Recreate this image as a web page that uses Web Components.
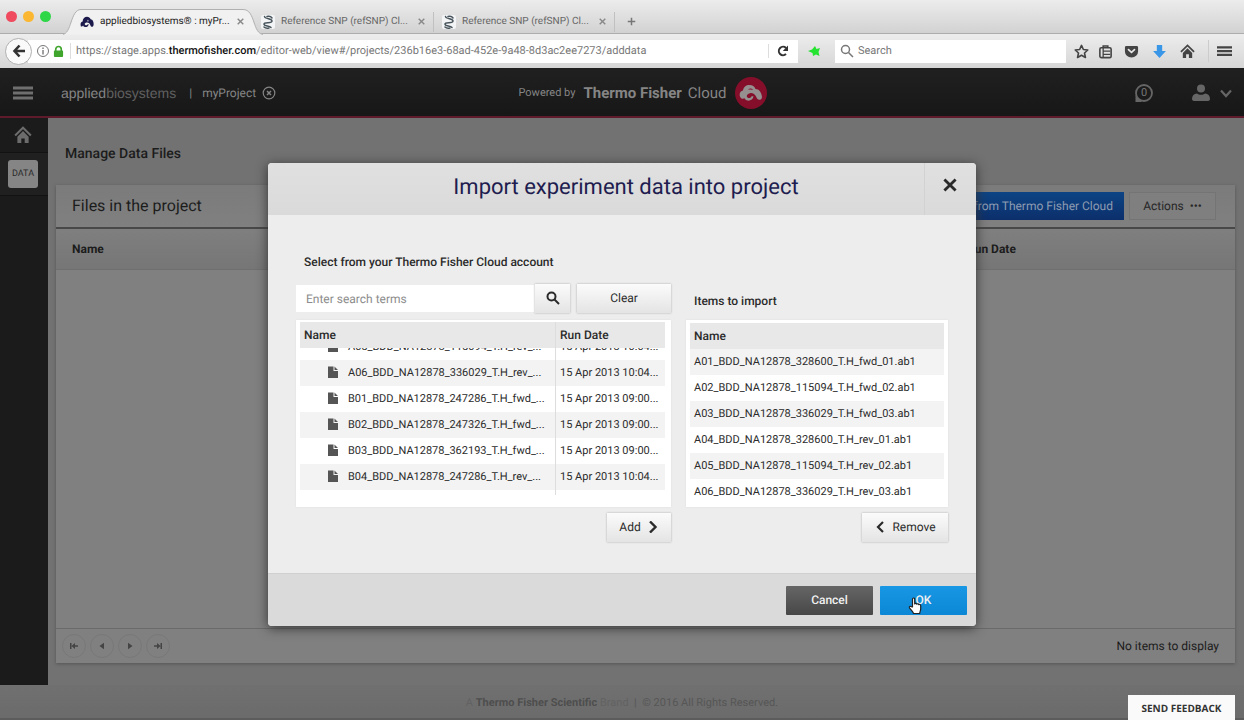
<!DOCTYPE html>
<html lang="en">
<head>
<meta charset="utf-8">
<title>appliedbiosystems® : myProject</title>
<style>
  body { margin: 0; font-family: Roboto, "Liberation Sans", sans-serif; font-size: 12px; text-rendering: geometricPrecision; }
</style>
</head>
<body>
<browser-window>
  <browser-tab slot="tabs" icon="cloud" active>appliedbiosystems® : myPr...</browser-tab>
  <browser-tab slot="tabs" icon="helix">Reference SNP (refSNP) Cl...</browser-tab>
  <browser-tab slot="tabs" icon="helix">Reference SNP (refSNP) Cl...</browser-tab>
  <app-header></app-header>
  <div style="display:flex; flex:1">
    <side-bar></side-bar>
    <files-page></files-page>
  </div>
  <app-footer></app-footer>
  <import-dialog slot="overlay">
    <span slot="title">Import experiment data into project</span>
    <cloud-picker slot="source"></cloud-picker>
    <import-list slot="target"></import-list>
  </import-dialog>
  <feedback-button slot="overlay"></feedback-button>
</browser-window>

<script>
const define = (name, markup, setup) => {
  const template = document.createElement('template');
  template.innerHTML = markup;
  customElements.define(name, class extends HTMLElement {
    connectedCallback() {
      if (this.shadowRoot) return;
      this.attachShadow({ mode: 'open' }).append(template.content.cloneNode(true));
      if (setup) setup(this, this.shadowRoot);
    }
  });
};

const BUTTON_RESET = 'button{font:inherit;color:inherit;border:0;padding:0;margin:0;background:none;display:inline-flex;align-items:center;justify-content:center}button,input{text-rendering:inherit}';

/* Icons: [viewBox width, viewBox height, markup] */
const ICONS = {
  cloud: [16, 14, '<path fill="currentColor" d="M1 12C0 9 1 7 3 6.500C3 3 5.500 1 8 1c2 0 3.500 1 4.200 2.800C14.500 4 15.800 7 15.600 10c-.2 1.500-1 2.500-2.200 2.300-1.200-.2-1.200-1.300-1.800-2.300-.8-1.600-2.400-2.700-4.300-2.300C5.500 8 4.800 9.700 6 10.500c1 .6 2.500 0 3-1.200l1 .5C9.500 12 7.500 13.200 5.500 12.700c-1-.3-1.700-.9-2-1.700C3 12 2.200 12.600 1 12z"/><circle cx="9" cy="5.500" r="1" fill="#fff" opacity=".5"/>'],
  helix: [14, 14, '<rect width="14" height="14" rx="2" fill="#f2f4f5"/><g fill="none" stroke="#48545c" stroke-width="1.500" stroke-linecap="round"><path d="M3.500 1.500C4 4.500 11 3 11 6S3 6.500 3 9s5 1.500 7 3.500"/><path d="M6 1.500c2-.5 4 0 5 1.500M3 12c1 1 3 1.500 5 1"/></g>'],
  close: [10, 10, '<path stroke="currentColor" stroke-width="2" d="M1 1l8 8M9 1L1 9"/>'],
  plus: [12, 12, '<path stroke="currentColor" stroke-width="2" d="M6 1v10M1 6h10"/>'],
  back: [14, 14, '<path fill="none" stroke="currentColor" stroke-width="2.600" d="M7.500 1.500L2.500 7l5 5.500M2.500 7H13"/>'],
  info: [14, 14, '<circle cx="7" cy="7" r="5.500" fill="none" stroke="currentColor"/><path stroke="currentColor" stroke-width="1.400" d="M7 6v4.500M7 3.500V5"/>'],
  lock: [12, 14, '<path fill="none" stroke="currentColor" stroke-width="1.800" d="M3 7V4.500a3 3 0 0 1 6 0V7"/><rect x="1" y="6" width="10" height="7" rx="1" fill="currentColor"/>'],
  reload: [14, 14, '<path fill="none" stroke="currentColor" stroke-width="2" d="M10 10a4.200 4.200 0 1 1 0-6"/><path fill="currentColor" d="M12 1.500v5.500H6.800z"/>'],
  greenstar: [14, 14, '<path fill="#25e331" d="M1 7l4-1.500L8 2l1.500 3L13 4l-1.500 4 1 4-3.500-1.500L6 12l-.5-3z"/>'],
  search: [14, 14, '<circle cx="5.500" cy="5.500" r="4" fill="none" stroke="currentColor" stroke-width="var(--w,1.500)"/><path stroke="currentColor" stroke-width="var(--w,1.500)" d="M8.500 8.500l4.500 4.500"/>'],
  star: [16, 16, '<path fill="none" stroke="currentColor" stroke-width="1.700" stroke-linejoin="round" d="M8 1.500l2 4.400 4.700.5-3.500 3.200 1 4.800L8 12l-4.200 2.400 1-4.800L1.300 6.400 6 5.900z"/>'],
  clipboard: [16, 16, '<rect x="2" y="4" width="12" height="10.500" rx="1.500" fill="none" stroke="currentColor" stroke-width="1.700"/><path stroke="currentColor" stroke-width="1.400" d="M5.500 4v10M5 7.500h8M5 11h8"/><path fill="none" stroke="currentColor" stroke-width="1.600" d="M5.500 4V2h5v2"/>'],
  pocket: [16, 16, '<path fill="currentColor" d="M2.500 2h11A1.500 1.500 0 0 1 15 3.500V8A7 6.500 0 0 1 1 8V3.500A1.500 1.500 0 0 1 2.500 2z"/><path fill="none" stroke="#e8e8e8" stroke-width="1.800" stroke-linecap="round" d="M4.800 6L8 9l3.200-3"/>'],
  download: [14, 14, '<path fill="currentColor" d="M4.500 1h5v5.500H13L7 13 1 6.500h3.500z"/>'],
  home: [16, 16, '<path fill="none" stroke="currentColor" stroke-width="1.800" d="M1 8.500l7-7 7 7"/><path fill="currentColor" d="M8 4.500l5 5V15H9.500v-4h-3v4H3V9.500z"/>'],
  menu: [20, 14, '<path stroke="currentColor" stroke-width="3" d="M0 2h20M0 7h20M0 12h20"/>'],
  circlex: [14, 14, '<circle cx="7" cy="7" r="5.800" fill="none" stroke="currentColor" stroke-width="1.200"/><path stroke="currentColor" stroke-width="1.500" d="M5 5l4 4M9 5L5 9"/>'],
  badge: [32, 32, '<circle cx="16" cy="16" r="16" fill="#850f2a"/><path fill="#958f90" d="M5 19.500c-1-3 .5-5.500 3-6C8.500 10 11 8 14.500 8c3 0 5 1.500 6 4 3.500 0 6 3.500 6.500 8 0 2-1.500 3-3 2.800-2-.3-2.200-1.800-3-3.300-1.200-2.500-3.500-3.800-6-3.300-2.800.6-4 2.800-2.500 4.300 1.500 1.200 3.800.3 4.300-1.500l1.700.6c-.5 3-3.200 4.400-6 4-1.500-.3-2.500-1-3-2.300-1.300.9-3.700.7-4.500-1.800z"/><path fill="#850f2a" d="M13 12.500c2-1.500 4-1 5 .5-1.500-.3-3-.3-5-.5z"/>'],
  chat: [20, 20, '<circle cx="10" cy="10" r="8" fill="none" stroke="currentColor" stroke-width="1.800"/><path fill="currentColor" d="M1.500 12v7h6.500z"/>'],
  user: [18, 18, '<circle cx="9" cy="4.500" r="4" fill="currentColor"/><path fill="currentColor" d="M0 15c0-3.500 2-5.300 5-5.500 2 1.700 6 1.700 8 0 3 .2 5 2 5 5.500 0 1.300-1 2-2 2H2c-1 0-2-.7-2-2z"/>'],
  down: [12, 12, '<path fill="none" stroke="currentColor" stroke-width="2.200" d="M1 3.500L6 9l5-5.500"/>'],
  right: [12, 12, '<path fill="none" stroke="currentColor" stroke-width="2.400" d="M3 0.500L8.500 6 3 11.500"/>'],
  left: [12, 12, '<path fill="none" stroke="currentColor" stroke-width="2.200" d="M9 1L4 6l5 5"/>'],
  file: [10, 12, '<path fill="currentColor" d="M0 .5h5.500V5H10v7H0zM6.500.5L10 4H6.500z"/>'],
  first: [10, 10, '<path fill="currentColor" d="M1 2h1.500v6H1zM2.500 5L6 2v2.200h3v1.600H6V8z"/>'],
  prev: [10, 10, '<path fill="currentColor" d="M2.500 5L7 1.800v6.400z"/>'],
  next: [10, 10, '<path fill="currentColor" d="M7.500 5L3 1.800v6.400z"/>'],
  last: [10, 10, '<path fill="currentColor" d="M9 2H7.500v6H9zM7.500 5L4 2v2.200H1v1.600h3V8z"/>'],
  hand: [14, 18, '<path fill="#fff" stroke="#222" stroke-width="1.200" stroke-linejoin="round" d="M4.500 10V2.200C4.500.6 6.700.6 6.700 2.200V7c.5-1 2-.7 2.100.2.600-.8 1.900-.4 2 .5.800-.6 1.900-.2 1.900 1V12c0 1.800-1 2.500-1 4.500H5.500c0-1.500-2.500-3.500-4-5.700-.6-1 .6-2 1.600-1.200z"/>']
};
customElements.define('ui-icon', class extends HTMLElement {
  connectedCallback() {
    if (this.shadowRoot) return;
    const [w, h, art] = ICONS[this.getAttribute('name')];
    this.attachShadow({ mode: 'open' }).innerHTML =
      `<style>:host{display:inline-flex;flex:none;width:${w}px;height:${h}px}svg{width:100%;height:100%}</style>
       <svg viewBox="0 0 ${w} ${h}" aria-hidden="true">${art}</svg>`;
  }
});

define('browser-tab', `
<style>
  :host{display:block;position:relative;width:181px;height:34px;box-sizing:border-box;color:#666}
  .row{position:relative;display:flex;align-items:center;gap:6px;height:25px;padding:9px 9px 0 8px}
  .label{flex:1;white-space:nowrap;font-size:10px;line-height:16px}
  .shape{display:none;position:absolute;left:-9px;top:9px;width:200px;height:26px}
  .sep{position:absolute;right:0;top:12px;width:1px;height:20px;background:#c0c0c0}
  .x{width:7px;height:7px;color:#888}
  :host([active]){z-index:1;color:#222}
  :host([active]) .shape{display:block}
  :host([active]) .sep{display:none}
  ${BUTTON_RESET}
</style>
<svg class="shape" viewBox="0 0 200 26"><path fill="#f1f1f1" stroke="#b0b0b0" d="M-1 25.500C9 25.500 7 .5 18 .5H180C193 .5 189 25.500 201 25.500"/></svg>
<div class="row"><slot name="icon"></slot><span class="label"><slot></slot></span><button aria-label="Close tab"><ui-icon class="x" name="close"></ui-icon></button></div>
<span class="sep"></span>`, (host, root) => {
  const icon = document.createElement('ui-icon');
  icon.setAttribute('name', host.getAttribute('icon'));
  icon.style.cssText = 'color:#1c1a4c;width:14px';
  root.querySelector('slot[name=icon]').replaceWith(icon);
});

define('browser-window', `
<style>
  :host{display:flex;flex-direction:column;min-height:100vh;background:#727272}
  .tabs{display:flex;align-items:stretch;height:34px;box-sizing:border-box;background:linear-gradient(#ececec,#d2d2d2);border-bottom:1px solid #adadad}
  .lights{display:flex;align-items:center;gap:6px;width:66px;padding-left:6px}
  .lights i{width:11px;height:11px;border-radius:50%;background:#f04a5e}
  .lights i:nth-child(2){background:#fbb731}.lights i:nth-child(3){background:#2fd648}
  .bar{display:flex;align-items:center;height:34px;box-sizing:border-box;padding:0 8px 0 5px;background:linear-gradient(#ededed,#d6d6d6);color:#444}
  .url{display:flex;align-items:center;flex:1;height:23px;margin-left:-4px;padding:0 8px 0 8px;background:#fff;color:#777;font-size:11px;line-height:16px}
  .url b{font-weight:500;color:#111}
  .url .lock{color:#3fa52c;margin:0 6px 0 3px;width:11px;height:13px}
  .addr{flex:1;border-left:1px solid #ddd;padding-left:5px;white-space:nowrap;overflow:hidden}
  .ext{margin:0 14px 0 9px}
  .find{display:flex;align-items:center;gap:4px;width:231px;height:23px;background:#fff;padding-left:5px;box-sizing:border-box;margin-right:3px;color:#777}
  .find input{flex:1;min-width:0;border:0;padding:0;background:none;font:11px/16px Roboto,sans-serif}
  input::placeholder{color:#777;opacity:1}
  .tools{display:flex;align-items:center}
  .page{position:relative;display:flex;flex-direction:column;flex:1}
  ${BUTTON_RESET}
  .back{width:27px;height:27px;border-radius:50%;flex:none;z-index:1;border:1px solid #b0b0b0;background:#fafafa;color:#333}
  .reload{border-left:1px solid #ddd;padding-left:7px;color:#333}
  .add{width:32px;padding-top:9px;color:#777}
  .add ui-icon{width:9px;height:9px}
  .tools button{width:28px}
  .tools button:nth-child(1),.tools button:nth-child(2){width:24px}
  .tools .menu{margin-left:7px;padding-left:4px;border-left:1px solid #ccc;height:22px}
  .tools ui-icon{width:15px;height:15px}
  .tools .menu ui-icon{width:15px;height:12px}
</style>
<div class="tabs"><div class="lights"><i></i><i></i><i></i></div><slot name="tabs"></slot><button class="add" aria-label="New tab"><ui-icon name="plus"></ui-icon></button></div>
<div class="bar">
  <button class="back" aria-label="Back"><ui-icon name="back"></ui-icon></button>
  <div class="url"><ui-icon name="info"></ui-icon><ui-icon class="lock" name="lock"></ui-icon>
    <span class="addr">https://stage.apps.<b>thermofisher.com</b>/editor-web/view#/projects/236b16e3-68ad-452e-9a48-8d3ac2ee7273/adddata</span>
    <button class="reload" aria-label="Reload"><ui-icon name="reload"></ui-icon></button></div>
  <ui-icon class="ext" name="greenstar"></ui-icon>
  <label class="find"><ui-icon name="search"></ui-icon><input type="text" placeholder="Search" aria-label="Search the web"></label>
  <div class="tools">
    <button aria-label="Bookmark"><ui-icon name="star"></ui-icon></button>
    <button aria-label="Library"><ui-icon name="clipboard"></ui-icon></button>
    <button aria-label="Pocket"><ui-icon name="pocket"></ui-icon></button>
    <button aria-label="Downloads" style="color:#3a97e8"><ui-icon name="download"></ui-icon></button>
    <button aria-label="Home"><ui-icon name="home"></ui-icon></button>
    <button class="menu" aria-label="Menu"><ui-icon name="menu"></ui-icon></button>
  </div>
</div>
<div class="page"><slot></slot><slot name="overlay"></slot></div>`);

define('app-header', `
<style>
  :host{display:grid;grid-template-columns:1fr auto 1fr;align-items:center;height:50px;box-sizing:border-box;padding:1px 12px 0 13px;background:linear-gradient(#202020,#171717);border-bottom:2px solid #5f1a2b;color:#858585;font-size:12px;line-height:20px}
  div{display:flex;align-items:center}
  ${BUTTON_RESET}
  .menu{color:#6f6f6f;margin-right:28px}
  .brand{font:14px/20px "Liberation Sans",sans-serif;color:#858585}
  .brand span{color:#606060}
  .bar{margin:0 10px 0 13px}
  .proj{margin-right:6px}
  .mid{margin-left:40px}
  .mid small{font-size:11px;margin-right:8px}
  .mid b{font-size:15px;font-weight:700;margin-right:6px}
  .mid span{font-size:15px;margin-right:8px}
  .end{justify-content:flex-end;color:#666}
  .chat{position:relative;margin-right:38px}
  .chat span{position:absolute;inset:0;text-align:center;font-size:11px;line-height:20px;color:#777}
  .user{gap:10px}
</style>
<div><button class="menu" aria-label="Open menu"><ui-icon name="menu"></ui-icon></button><span class="brand">applied<span>biosystems</span></span><span class="bar">|</span><span class="proj">myProject</span><button aria-label="Close project"><ui-icon name="circlex"></ui-icon></button></div>
<div class="mid"><small>Powered by</small><b>Thermo Fisher</b><span>Cloud</span><ui-icon name="badge"></ui-icon></div>
<div class="end"><button class="chat" aria-label="Messages"><ui-icon name="chat"></ui-icon><span>0</span></button><button class="user" aria-label="Account"><ui-icon name="user"></ui-icon><ui-icon name="down"></ui-icon></button></div>`);

define('side-bar', `
<style>
  :host{display:flex;flex-direction:column;width:48px;background:#1b1b1b;color:#6c6c6c}
  a{display:flex;align-items:center;justify-content:center;height:34px;padding-right:2px;border-bottom:1px solid #121212;color:inherit;text-decoration:none}
  a ui-icon{width:18px;height:18px}
  a.data{height:42px;background:#202020}
  .data span{width:30px;height:28px;border-radius:3px;background:#858585;color:#2a2a2a;font-size:9px;line-height:28px;text-align:center}
</style>
<a href="#home" aria-label="Home"><ui-icon name="home"></ui-icon></a>
<a href="#data" class="data"><span>DATA</span></a>`);

define('files-page', `
<style>
  :host{display:flex;flex-direction:column;flex:1;padding:26px 9px 22px 8px;color:#1c1c1c}
  h1{margin:0 0 21px 9px;font-size:14px;line-height:20px;font-weight:500}
  .panel{display:flex;flex-direction:column;flex:1;background:#808080;box-shadow:0 1px 3px #555}
  .head{display:flex;align-items:center;gap:5px;height:44px;padding:0 19px 0 16px;background:linear-gradient(#7b7b7b,#808080);border-bottom:2px solid #484848;box-sizing:border-box}
  h2{flex:1;margin:0;font-size:16px;line-height:20px;font-weight:400}
  ${BUTTON_RESET}
  .head button{height:28px;padding:0 11px;font-size:12px;background:linear-gradient(#0d4484,#0c2f6b);color:#8d9cb2;box-sizing:border-box}
  .head .act{width:87px;padding:0;background:#7f7f7f;border:1px solid #747474;color:#262626}
  table{width:100%;border-collapse:collapse;table-layout:fixed}
  th{height:40px;padding:0 16px;text-align:left;font-size:12px;line-height:16px;font-weight:700;background:linear-gradient(#7f7f7f,#767676);border-bottom:1px solid #6f6f6f;box-sizing:border-box}
  th:last-child{width:284px}
  .foot{display:flex;align-items:center;gap:4px;height:34px;margin-top:auto;padding:0 16px 0 6px;border-top:1px solid #6a6a6a}
  .foot button{width:24px;height:24px;border-radius:50%;border:1px solid #787878;color:#444}
  .foot span{margin-left:auto;font-size:12px;line-height:16px}
</style>
<h1>Manage Data Files</h1>
<section class="panel">
  <div class="head"><h2>Files in the project</h2><button>Import from Thermo Fisher Cloud</button><button class="act">Actions &nbsp;•••</button></div>
  <table><thead><tr><th>Name</th><th>Run Date</th></tr></thead></table>
  <div class="foot"><button aria-label="First page"><ui-icon name="first"></ui-icon></button><button aria-label="Previous page"><ui-icon name="prev"></ui-icon></button><button aria-label="Next page"><ui-icon name="next"></ui-icon></button><button aria-label="Last page"><ui-icon name="last"></ui-icon></button><span>No items to display</span></div>
</section>`);

define('app-footer', `
<style>
  :host{display:block;height:35px;box-sizing:border-box;border-bottom:2px solid #5c5c5c;background:linear-gradient(#707070,#6b6b6b);text-align:center;font-size:11px;line-height:36px;color:#565656}
  b{font-weight:700;color:#4e4e4e}span{color:#626262}
</style><span>A</span> <b>Thermo Fisher Scientific</b> <span>Brand</span> &nbsp;|&nbsp; © 2016 All Rights Reserved.`);

define('feedback-button', `
<style>
  :host{position:absolute;right:9px;bottom:0}
  ${BUTTON_RESET}
  button{height:25px;width:107px;background:#fafafa;color:#333;font:700 10px/16px "Open Sans",sans-serif}
</style><button>SEND FEEDBACK</button>`);

define('import-dialog', `
<style>
  :host{position:absolute;inset:0;display:grid;place-items:center}
  section{width:708px;max-width:90vw;border-radius:4px;overflow:hidden;background:#ededed;box-shadow:0 2px 12px #333}
  header{display:flex;align-items:center;height:52px;background:linear-gradient(#e0e0e0,#dadada)}
  h2{flex:1;margin:0;padding:0 0 2px 60px;text-align:center;font-size:22px;line-height:28px;font-weight:400;color:#211c4f}
  ${BUTTON_RESET}
  .close{width:52px;height:100%;border-left:1px solid #d2d2d2;box-sizing:border-box;color:#2a2a2a;padding:0 2px 7px 0}
  .close ui-icon{width:14px;height:14px}
  .body{display:flex;align-items:flex-end;gap:15px;padding:39px 28px 31px}
  slot[name=source]::slotted(*){flex:375}
  slot[name=target]::slotted(*){flex:262}
  footer{display:flex;justify-content:flex-end;gap:7px;padding:12px 9px 11px;border-top:1px solid #d0d0d0;background:#dadada}
  footer button{width:87px;height:29px;color:#f0f0f0;font-size:12px;font-weight:500;border-radius:1px;background:linear-gradient(#666,#474747)}
  footer .ok{position:relative;background:linear-gradient(#1897e4,#0b87d5)}
  .ok ui-icon{position:absolute;left:28px;top:11px}
</style>
<section role="dialog" aria-label="Import experiment data into project">
  <header><h2><slot name="title"></slot></h2><button class="close" aria-label="Close"><ui-icon name="close"></ui-icon></button></header>
  <div class="body"><slot name="source"></slot><slot name="target"></slot></div>
  <footer><button>Cancel</button><button class="ok">OK<ui-icon name="hand"></ui-icon></button></footer>
</section>`);

const LIST_CSS = `
  :host{display:flex;flex-direction:column;min-width:0;color:#2b2b2b;font-size:12px;line-height:16px}
  ${BUTTON_RESET}
  button{height:29px;font-size:12px;background:linear-gradient(#fbfbfb,#e4e4e4);box-shadow:0 0 2px #aaa}
  h3{margin:0;padding:0 8px;font-size:12px;line-height:16px;font-weight:500}
  .box{background:#fff;padding:3px 4px 11px;box-shadow:0 0 2px #ddd}
  .scroll{height:173px;overflow:auto;scrollbar-width:none}
  table{width:100%;border-spacing:0;table-layout:fixed}
  th,td{height:26px;padding:0 4px;text-align:left;white-space:nowrap;box-sizing:border-box}
  td{font-size:11px}
  th{position:sticky;top:0;z-index:1;background:#e8e8e8;font-weight:500}
  .next{align-self:flex-end;margin-top:6px;gap:6px}`;

define('cloud-picker', `
<style>${LIST_CSS}
  .find{display:flex;margin:14px 0 7px}
  input{flex:1;min-width:0;border:0;padding:1px 10px 0;margin:1px 0;background:#fff;font:12px/16px Roboto,sans-serif}
  input::placeholder{color:#8c8c8c;opacity:1}
  .go{width:35px;margin-right:7px;--w:2}
  .clear{width:94px}
  .box{padding:2px 6px 12px 4px}
  .scroll{background:linear-gradient(#ddd,#ddd) 255px 0/1px 100% no-repeat}
  tbody tr:nth-child(even){background:#f3f3f3}
  th:last-child{width:110px}
  td:last-child,th:last-child{border-left:1px solid #ddd}
  td:first-child{padding-left:28px}
  td ui-icon{margin-right:10px;vertical-align:-2px;color:#555}
  table{margin-bottom:8px}
  .next{width:64px}
</style>
<h3>Select from your Thermo Fisher Cloud account</h3>
<div class="find"><input type="text" placeholder="Enter search terms" aria-label="Enter search terms"><button class="go" aria-label="Search"><ui-icon name="search"></ui-icon></button><button class="clear">Clear</button></div>
<div class="box"><div class="scroll"><table><thead><tr><th>Name</th><th>Run Date</th></tr></thead><tbody></tbody></table></div></div>
<button class="next">Add <ui-icon name="right"></ui-icon></button>`, (host, root) => {
  root.querySelector('tbody').innerHTML = [
    ['A05_BDD_NA12878_115094_T.H_rev_...', '15 Apr 2013 10:04...'],
    ['A06_BDD_NA12878_336029_T.H_rev_...', '15 Apr 2013 10:04...'],
    ['B01_BDD_NA12878_247286_T.H_fwd_...', '15 Apr 2013 09:00...'],
    ['B02_BDD_NA12878_247326_T.H_fwd_...', '15 Apr 2013 09:00...'],
    ['B03_BDD_NA12878_362193_T.H_fwd_...', '15 Apr 2013 09:00...'],
    ['B04_BDD_NA12878_247286_T.H_rev_...', '15 Apr 2013 10:04...']
  ].map(([n, d]) => `<tr><td><ui-icon name="file"></ui-icon>${n}</td><td>${d}</td></tr>`).join('');
  /* start part-way down the list, with the first row half under the header */
  requestAnimationFrame(() => { root.querySelector('.scroll').scrollTop = 14; });
});

define('import-list', `
<style>${LIST_CSS}
  h3{margin-bottom:11px}
  tbody tr:nth-child(odd){background:#f3f3f3}
  .next{width:86px}
</style>
<h3>Items to import</h3>
<div class="box"><div class="scroll"><table><thead><tr><th>Name</th></tr></thead><tbody></tbody></table></div></div>
<button class="next"><ui-icon name="left"></ui-icon> Remove</button>`, (host, root) => {
  root.querySelector('tbody').innerHTML = [
    'A01_BDD_NA12878_328600_T.H_fwd_01.ab1', 'A02_BDD_NA12878_115094_T.H_fwd_02.ab1',
    'A03_BDD_NA12878_336029_T.H_fwd_03.ab1', 'A04_BDD_NA12878_328600_T.H_rev_01.ab1',
    'A05_BDD_NA12878_115094_T.H_rev_02.ab1', 'A06_BDD_NA12878_336029_T.H_rev_03.ab1'
  ].map(n => `<tr><td>${n}</td></tr>`).join('');
});
</script>
</body>
</html>
